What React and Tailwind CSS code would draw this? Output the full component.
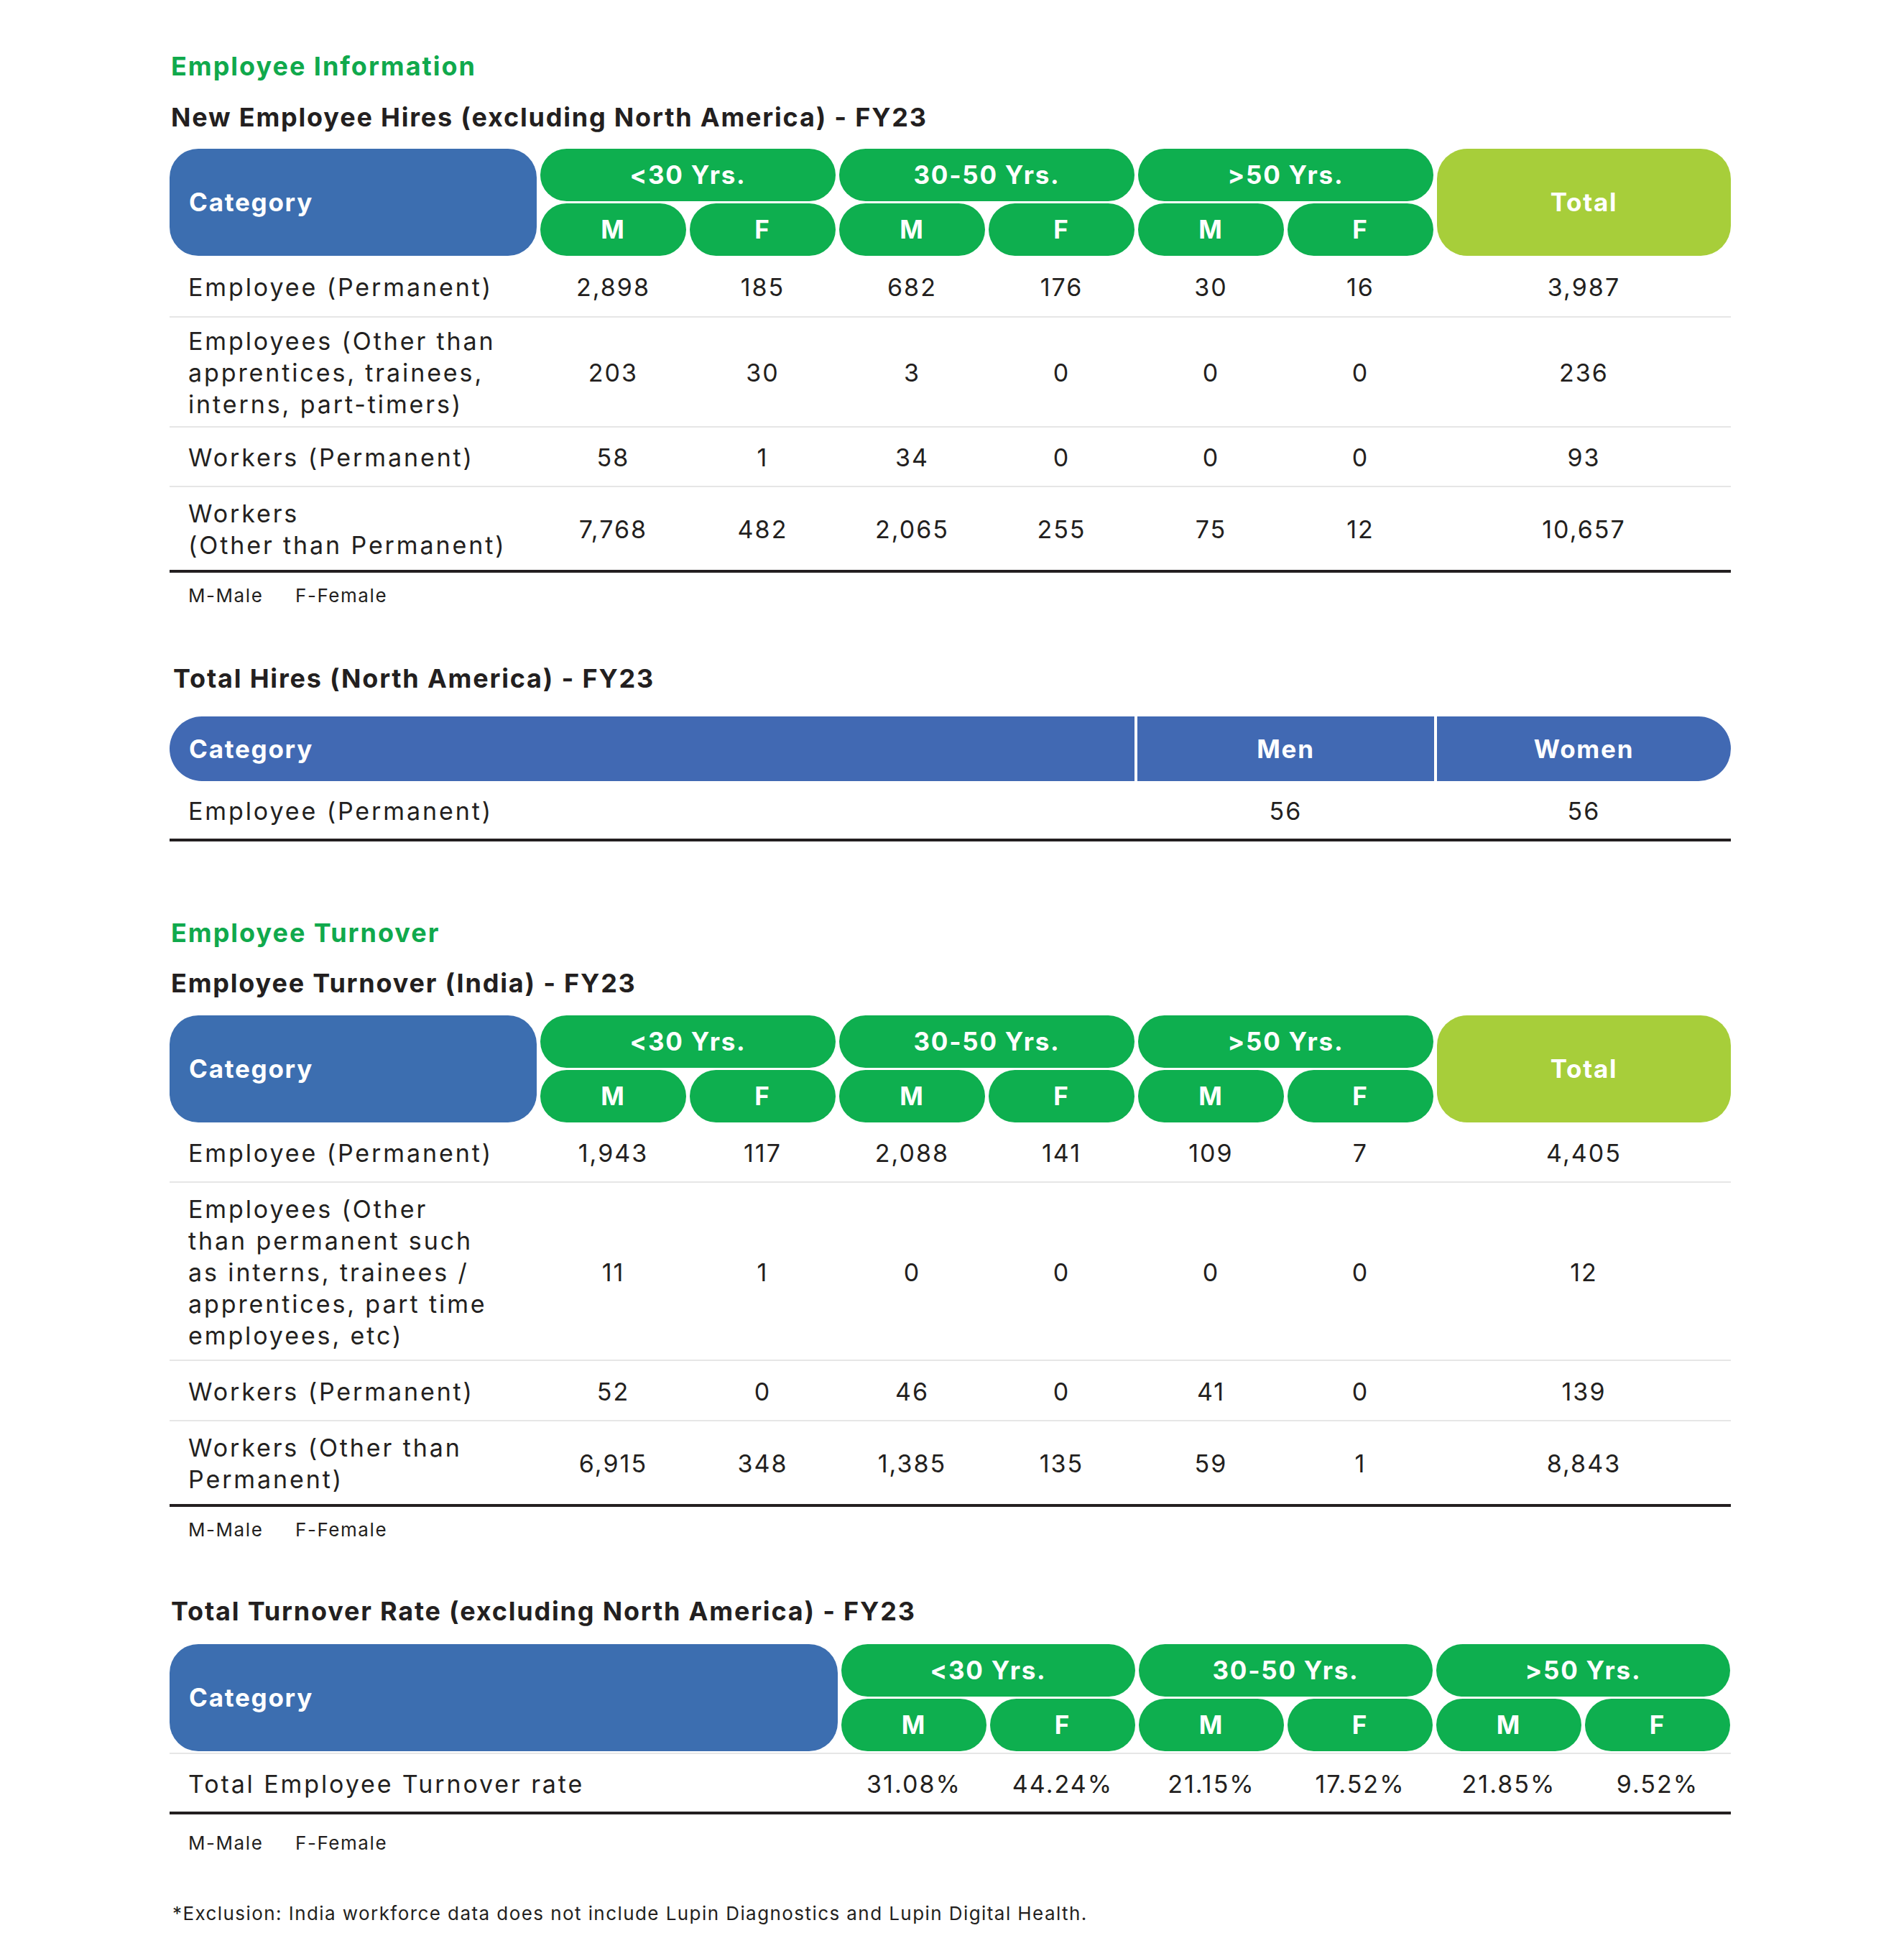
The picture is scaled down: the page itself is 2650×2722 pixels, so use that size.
import React from 'react'

const font = "font-['Inter','Noto_Sans',sans-serif]"

const hiresRows = [
  {label: ['Employee (Permanent)'], vals: ['2,898','185','682','176','30','16'], total: '3,987', h: 'h-[86px]'},
  {label: ['Employees (Other than','apprentices, trainees,','interns, part-timers)'], vals: ['203','30','3','0','0','0'], total: '236', h: 'h-[153px]'},
  {label: ['Workers (Permanent)'], vals: ['58','1','34','0','0','0'], total: '93', h: 'h-[83px]'},
  {label: ['Workers','(Other than Permanent)'], vals: ['7,768','482','2,065','255','75','12'], total: '10,657', h: 'h-[119px]'},
]

const turnoverRows = [
  {label: ['Employee (Permanent)'], vals: ['1,943','117','2,088','141','109','7'], total: '4,405', h: 'h-[84px]'},
  {label: ['Employees (Other','than permanent such','as interns, trainees /','apprentices, part time','employees, etc)'], vals: ['11','1','0','0','0','0'], total: '12', h: 'h-[248px]'},
  {label: ['Workers (Permanent)'], vals: ['52','0','46','0','41','0'], total: '139', h: 'h-[84px]'},
  {label: ['Workers (Other than','Permanent)'], vals: ['6,915','348','1,385','135','59','1'], total: '8,843', h: 'h-[119px]'},
]

const rates = ['31.08%','44.24%','21.15%','17.52%','21.85%','9.52%']

const ages = [
  {label: '<30 Yrs.', col: 'col-start-2', m: 'col-start-2', f: 'col-start-3'},
  {label: '30-50 Yrs.', col: 'col-start-4', m: 'col-start-4', f: 'col-start-5'},
  {label: '>50 Yrs.', col: 'col-start-6', m: 'col-start-6', f: 'col-start-7'},
]

const SectionTitle = ({children, className}) => (
  <h2 className={`text-[36px] leading-[44px] font-bold tracking-[0.055em] text-[#10a94c] ${className}`}>{children}</h2>
)

const TableTitle = ({children, className}) => (
  <h3 className={`text-[36px] leading-[44px] font-bold tracking-[0.05em] text-[#231f20] ${className}`}>{children}</h3>
)

const Legend = ({className}) => (
  <div className={`flex pl-[26px] text-[26px] leading-[32px] tracking-[0.06em] text-[#231f20] ${className}`}>
    <span className="w-[149px]">M-Male</span>
    <span>F-Female</span>
  </div>
)

const Pill = ({children, className}) => (
  <div className={`row-start-2 flex items-center justify-center rounded-full bg-[#0eaf4f] text-white text-[35px] font-bold tracking-[0.05em] ${className}`}>
    {children}
  </div>
)

// <30 / 30-50 / >50 headers with the M / F split underneath
const AgeCells = () => (
  <>
    {ages.map((a) => (
      <div key={a.label} className={`${a.col} col-span-2 row-start-1 flex items-center justify-center rounded-full bg-[#0eaf4f] text-white text-[35px] font-bold tracking-[0.05em]`}>
        {a.label}
      </div>
    ))}
    {ages.map((a) => (
      <React.Fragment key={a.label + 'mf'}>
        <Pill className={a.m}>M</Pill>
        <Pill className={a.f}>F</Pill>
      </React.Fragment>
    ))}
  </>
)

const AgeTable = ({rows}) => (
  <div>
    <div className="grid grid-cols-[511px_repeat(6,203px)_409px] grid-rows-[73px_73px] gap-x-[5px] gap-y-[3px]">
      <div className="col-start-1 row-start-1 row-span-2 flex items-center rounded-[40px] bg-[#3c6eb0] pl-[27px] text-[35px] font-bold tracking-[0.05em] text-white">
        Category
      </div>
      <AgeCells />
      <div className="col-start-8 row-start-1 row-span-2 flex items-center justify-center rounded-[42px] bg-[#a7ce3a] text-[35px] font-bold tracking-[0.05em] text-white">
        Total
      </div>
    </div>
    {rows.map((r, idx) => (
      <div
        key={idx}
        className={`grid grid-cols-[511px_repeat(6,203px)_409px] gap-x-[5px] items-center pt-[3px] text-[34px] leading-[44px] text-[#231f20] ${r.h} ${idx === rows.length - 1 ? 'border-b-4 border-[#231f20]' : 'border-b-2 border-[#e6e6e6]'}`}
      >
        <div className="pl-[26px] tracking-[0.085em]">
          {r.label.map((l, i) => <div key={i}>{l}</div>)}
        </div>
        {r.vals.map((v, i) => (
          <div key={i} className="text-center tracking-[0.06em]">{v}</div>
        ))}
        <div className="text-center tracking-[0.06em]">{r.total}</div>
      </div>
    ))}
  </div>
)

const App = () => {
  return (
    <div className={`min-h-[2722px] w-[2650px] bg-white ${font}`}>
      <div className="ml-[236px] w-[2173px] pt-[70px]">
        <SectionTitle className="pl-[2px]">Employee Information</SectionTitle>
        <TableTitle className="mt-[27px] pl-[2px]">New Employee Hires (excluding North America) - FY23</TableTitle>
        <div className="mt-[22px]">
          <AgeTable rows={hiresRows} />
        </div>
        <Legend className="mt-[16px]" />

        <TableTitle className="mt-[77px] pl-[5px]">Total Hires (North America) - FY23</TableTitle>
        <div className="mt-[31px]">
          <div className="grid h-[90px] grid-cols-[1343px_413px_409px] gap-x-[4px] text-[35px] font-bold tracking-[0.05em] text-white">
            <div className="flex items-center rounded-l-full bg-[#4169b3] pl-[27px]">Category</div>
            <div className="flex items-center justify-center bg-[#4169b3]">Men</div>
            <div className="flex items-center justify-center rounded-r-full bg-[#4169b3]">Women</div>
          </div>
          <div className="grid h-[84px] grid-cols-[1343px_413px_409px] gap-x-[4px] items-center pt-[3px] border-b-4 border-[#231f20] text-[34px] leading-[44px] text-[#231f20]">
            <div className="pl-[26px] tracking-[0.085em]">Employee (Permanent)</div>
            <div className="text-center tracking-[0.06em]">56</div>
            <div className="text-center tracking-[0.06em]">56</div>
          </div>
        </div>

        <SectionTitle className="mt-[105px] pl-[2px]">Employee Turnover</SectionTitle>
        <TableTitle className="mt-[26px] pl-[2px]">Employee Turnover (India) - FY23</TableTitle>
        <div className="mt-[23px]">
          <AgeTable rows={turnoverRows} />
        </div>
        <Legend className="mt-[16px]" />

        <TableTitle className="mt-[75px] pl-[2px]">Total Turnover Rate (excluding North America) - FY23</TableTitle>
        <div className="mt-[24px]">
          <div className="grid grid-cols-[930px_repeat(6,202px)] grid-rows-[73px_73px] gap-x-[5px] gap-y-[3px]">
            <div className="col-start-1 row-start-1 row-span-2 flex items-center rounded-[40px] bg-[#3c6eb0] pl-[27px] text-[35px] font-bold tracking-[0.05em] text-white">
              Category
            </div>
            <AgeCells />
          </div>
          <div className="mt-[2px] grid h-[86px] grid-cols-[930px_repeat(6,202px)] gap-x-[5px] items-center pt-[3px] border-t-2 border-b-4 border-t-[#e6e6e6] border-b-[#231f20] text-[34px] leading-[44px] text-[#231f20]">
            <div className="pl-[26px] tracking-[0.085em]">Total Employee Turnover rate</div>
            {rates.map((v) => (
              <div key={v} className="text-center tracking-[0.06em]">{v}</div>
            ))}
          </div>
        </div>
        <Legend className="mt-[24px]" />

        <p className="mt-[66px] pl-[4px] text-[26px] leading-[32px] tracking-[0.055em] text-[#231f20]">
          *Exclusion: India workforce data does not include Lupin Diagnostics and Lupin Digital Health.
        </p>
      </div>
    </div>
  )
}

export default App
